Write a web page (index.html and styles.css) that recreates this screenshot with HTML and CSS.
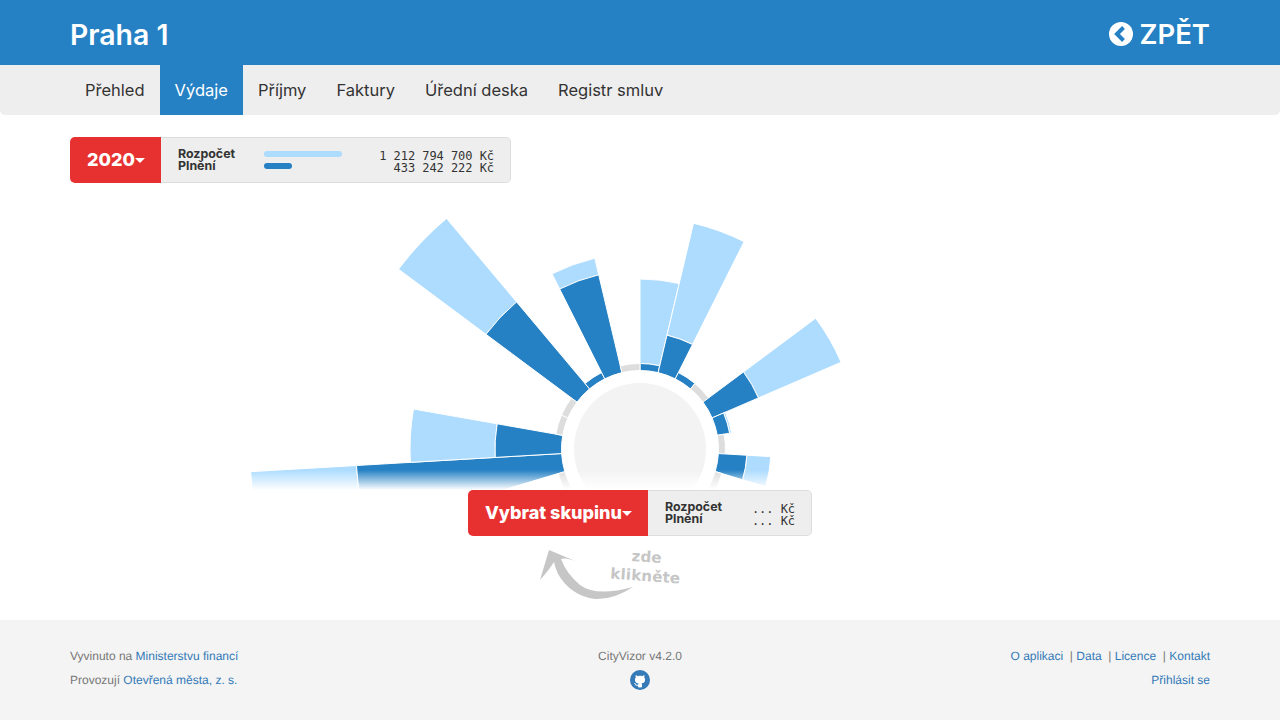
FILE: index.html
```html
<!DOCTYPE html>
<html lang="cs">
<head>
  <meta charset="UTF-8" />
  <title>Praha 1 - CityVizor</title>
  <link rel="stylesheet" href="styles.css">
</head>
<body>
  <header class="topbar">
    <div class="container topbar-inner">
      <h1 class="profile-name">Praha 1</h1>
      <a class="back-link" href="#">
        <svg class="back-icon" viewBox="0 0 24 24" aria-hidden="true">
          <circle cx="12" cy="12" r="12" fill="#fff"/>
          <path d="M14.5 5.5 L8 12 L14.5 18.5" fill="none" stroke="#2581c4" stroke-width="4"/>
        </svg>
        ZPĚT
      </a>
    </div>
  </header>

  <nav class="menu">
    <div class="container menu-inner">
      <a href="#">Přehled</a>
      <a href="#" class="active">Výdaje</a>
      <a href="#">Příjmy</a>
      <a href="#">Faktury</a>
      <a href="#">Úřední deska</a>
      <a href="#">Registr smluv</a>
    </div>
  </nav>

  <main class="container content">
    <div class="select-box">
      <button class="select-button year-button">2020<span class="caret"></span></button>
      <div class="select-info year-info">
        <div class="info-row">
          <b>Rozpočet</b>
          <span class="bar"><i class="bar-fill budget" style="width: 78px"></i></span>
          <span class="amount">1 212 794 700 Kč</span>
        </div>
        <div class="info-row">
          <b>Plnění</b>
          <span class="bar"><i class="bar-fill spent" style="width: 28px"></i></span>
          <span class="amount">433 242 222 Kč</span>
        </div>
      </div>
    </div>

    <div class="chart">
      <svg id="sunburst" width="800" height="290" viewBox="-400 -249 800 290">
        <defs>
          <linearGradient id="fade" x1="0" y1="0" x2="0" y2="1">
            <stop offset="0" stop-color="#fff" stop-opacity="0"/>
            <stop offset="1" stop-color="#fff"/>
          </linearGradient>
        </defs>
      </svg>
    </div>

    <div class="select-box group-box">
      <button class="select-button group-button">Vybrat skupinu<span class="caret"></span></button>
      <div class="select-info group-info">
        <div class="info-row">
          <b>Rozpočet</b>
          <span class="amount">... Kč</span>
        </div>
        <div class="info-row">
          <b>Plnění</b>
          <span class="amount">... Kč</span>
        </div>
      </div>
    </div>

    <div class="hint">
      <svg class="hint-arrow" width="100" height="56" viewBox="0 0 100 56" aria-hidden="true">
        <path d="M9 4 L40 17 Q27 11 21 13 Q26 27 40 39 Q56 51 93 41 Q73 54 55 53 Q31 50 18 28 Q15 21 14 16 Q9 24 0 34 Z" fill="#c6c6c6"/>
      </svg>
      <div class="hint-text"><span>zde</span><span>klikněte</span></div>
    </div>
  </main>

  <footer class="footer">
    <div class="container footer-inner">
      <div class="footer-col">
        <p>Vyvinuto na <a href="#">Ministerstvu financí</a></p>
        <p>Provozují <a href="#">Otevřená města, z. s.</a></p>
      </div>
      <div class="footer-col footer-center">
        <p>CityVizor v4.2.0</p>
        <svg class="github" width="20" height="20" viewBox="0 0 16 16" aria-hidden="true">
          <circle cx="8" cy="8" r="8" fill="#337ab7"/>
          <g transform="translate(1.6 1.6) scale(.8)">
            <circle cx="8" cy="8" r="7.6" fill="#fff"/>
            <path fill="#337ab7" d="M8 0C3.58 0 0 3.58 0 8c0 3.54 2.29 6.53 5.47 7.59.4.07.55-.17.55-.38 0-.19-.01-.82-.01-1.49-2.01.37-2.53-.49-2.69-.94-.09-.23-.48-.94-.82-1.13-.28-.15-.68-.52-.01-.53.63-.01 1.08.58 1.23.82.72 1.21 1.87.87 2.33.66.07-.52.28-.87.51-1.07-1.78-.2-3.64-.89-3.64-3.95 0-.87.31-1.59.82-2.15-.08-.2-.36-1.02.08-2.12 0 0 .67-.21 2.2.82.64-.18 1.32-.27 2-.27.68 0 1.36.09 2 .27 1.53-1.04 2.2-.82 2.2-.82.44 1.1.16 1.92.08 2.12.51.56.82 1.27.82 2.15 0 3.07-1.87 3.75-3.65 3.95.29.25.54.73.54 1.48 0 1.07-.01 1.93-.01 2.2 0 .21.15.46.55.38A8.013 8.013 0 0016 8c0-4.42-3.58-8-8-8z"/>
          </g>
        </svg>
      </div>
      <div class="footer-col footer-right">
        <p><a href="#">O aplikaci</a> &nbsp;| <a href="#">Data</a> &nbsp;| <a href="#">Licence</a> &nbsp;| <a href="#">Kontakt</a></p>
        <p><a href="#">Přihlásit se</a></p>
      </div>
    </div>
  </footer>

  <script src="script.js"></script>
</body>
</html>
```

FILE: styles.css
```css
* {
  box-sizing: border-box;
}

body {
  margin: 0;
  font-family: Inter, Arial, sans-serif;
  color: #333;
  background: #fff;
}

a {
  text-decoration: none;
}

.container {
  width: 1140px;
  margin: 0 auto;
}

.topbar {
  height: 65px;
  background: #2581c4;
  color: #fff;
}

.topbar-inner {
  height: 100%;
  padding-top: 3px;
  display: flex;
  align-items: center;
  justify-content: space-between;
}

.profile-name {
  margin: 0;
  font-size: 28.4px;
  font-weight: 600;
}

.back-link {
  display: flex;
  align-items: center;
  gap: 7px;
  color: #fff;
  font-size: 27.5px;
  font-weight: 600;
}

.back-icon {
  width: 24px;
  height: 24px;
}

.menu {
  height: 50px;
  background: #eee;
  border-radius: 0 0 5px 5px;
}

.menu-inner {
  height: 100%;
  display: flex;
}

.menu-inner a {
  padding: 0 15px;
  line-height: 51px;
  font-size: 16.5px;
  color: #333;
}

.menu-inner a.active {
  background: #2581c4;
  color: #fff;
}

.content {
  padding-top: 22px;
  height: 505px;
}

.select-box {
  display: flex;
  height: 46px;
  width: 441px;
}

.select-button {
  border: 0;
  padding: 0 0 2px 1px;
  background: #e73131;
  color: #fff;
  font-family: inherit;
  font-weight: 800;
  font-size: 18px;
  border-radius: 5px 0 0 5px;
  display: flex;
  align-items: center;
  justify-content: center;
}

.year-button {
  width: 91px;
}

.group-button {
  width: 180px;
}

.caret {
  width: 0;
  height: 0;
  margin-top: 2px;
  border-left: 5px solid transparent;
  border-right: 5px solid transparent;
  border-top: 5px solid #fff;
}

.select-info {
  flex: 1;
  display: flex;
  flex-direction: column;
  justify-content: center;
  padding: 0 16px 0 17px;
  background: #eee;
  border: 1px solid #ddd;
  border-left: 0;
  border-radius: 0 5px 5px 0;
  font-size: 12.4px;
  line-height: 12px;
}

.info-row {
  display: flex;
  align-items: center;
  height: 12px;
}

.info-row b {
  width: 86px;
  margin-top: -1px;
  font-weight: 700;
  color: #333;
}

.bar {
  width: 78px;
  height: 6px;
  display: block;
}

.bar-fill {
  display: block;
  height: 6px;
  border-radius: 3px;
}

.bar-fill.budget {
  background: #addcff;
}

.bar-fill.spent {
  background: #2581c4;
}

.amount {
  margin-left: auto;
  padding-top: 3px;
  font-family: "DejaVu Sans Mono", "Liberation Mono", monospace;
  font-size: 12px;
  letter-spacing: -0.05px;
  white-space: pre;
  color: #333;
}

.chart {
  margin-top: 17px;
  height: 290px;
  display: flex;
  justify-content: center;
}

.group-box {
  width: 344px;
  margin: 0 auto;
}

.hint {
  width: 200px;
  height: 56px;
  margin: 10px auto 0 auto;
  position: relative;
  display: flex;
}

.hint-arrow {
  display: block;
  flex: none;
}

.hint-text {
  position: absolute;
  left: 71px;
  top: 2px;
  display: flex;
  flex-direction: column;
  align-items: center;
  color: #c6c6c6;
  font-family: "DejaVu Sans", sans-serif;
  font-size: 15px;
  font-weight: 700;
  line-height: 19px;
  letter-spacing: 0.2px;
  transform: rotate(4deg);
}

.footer {
  height: 100px;
  background: #f4f4f4;
  font-family: "Liberation Sans", Arial, sans-serif;
  font-size: 12px;
  text-rendering: geometricPrecision;
  color: #777;
}

.footer-inner {
  display: flex;
  justify-content: space-between;
  padding-top: 24px;
}

.footer-col {
  width: 33.33%;
}

.footer-col p {
  margin: 0;
  height: 24px;
  line-height: 24px;
}

.footer-col a {
  color: #337ab7;
}

.footer-center {
  text-align: center;
}

.footer-right {
  text-align: right;
}

.github {
  display: block;
  margin: 2px auto 0 auto;
}
```

FILE: script.js
```js
// dark = spent radius, light = budget radius, null = empty group
const groups = [
  [85.5, 170], [117, 232], [85.5, 85.5], null, [129, 219], [91, 93], null, [107, 131], null,
  null, null, null, null, null, null, null, null, null, null,
  [284, 390], [145, 230], null, null, [192, 301], [85.5, 85.5], [179, 196], null
];

const INNER = 78.5;
const RING = 85.5;
const STEP = 360 / groups.length;
const svg = document.getElementById("sunburst");
const ns = "http://www.w3.org/2000/svg";

function point(r, deg) {
  const a = deg * Math.PI / 180;
  return (r * Math.sin(a)).toFixed(2) + " " + (-r * Math.cos(a)).toFixed(2);
}

function sector(r0, r1, from, to, fill) {
  const path = document.createElementNS(ns, "path");
  path.setAttribute("d", `M${point(r0, from)} L${point(r1, from)} A${r1} ${r1} 0 0 1 ${point(r1, to)} L${point(r0, to)} A${r0} ${r0} 0 0 0 ${point(r0, from)} Z`);
  path.setAttribute("fill", fill);
  path.setAttribute("stroke", "#fff");
  path.setAttribute("stroke-width", "1");
  svg.appendChild(path);
}

groups.forEach((g, i) => {
  const from = i * STEP;
  const to = from + STEP;
  if (!g) {
    sector(INNER, RING, from, to, "#ddd");
    return;
  }
  if (g[1] > g[0]) sector(g[0], g[1], from, to, "#addcff");
  sector(INNER, g[0], from, to, "#2581c4");
});

const circle = document.createElementNS(ns, "circle");
circle.setAttribute("r", "66");
circle.setAttribute("fill", "#f3f3f3");
svg.appendChild(circle);

const fade = document.createElementNS(ns, "rect");
fade.setAttribute("x", "-400");
fade.setAttribute("y", "21");
fade.setAttribute("width", "800");
fade.setAttribute("height", "20");
fade.setAttribute("fill", "url(#fade)");
svg.appendChild(fade);
```
